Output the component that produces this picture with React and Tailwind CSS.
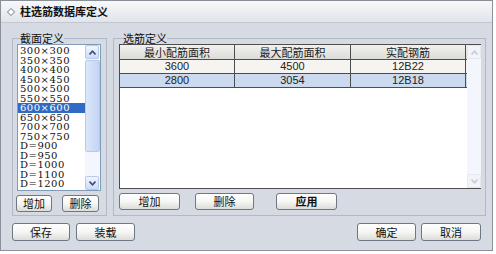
import React from 'react';

const sizes = [
  '300×300', '350×350', '400×400', '450×450', '500×500', '550×550',
  '600×600', '650×650', '700×700', '750×750',
  'D=900', 'D=950', 'D=1000', 'D=1100', 'D=1200',
];

const rows = [
  { min: '3600', max: '4500', bars: '12B22' },
  { min: '2800', max: '3054', bars: '12B18', selected: true },
];

// XP style push button
function Btn({ children, w, h = 'h-[17px]', bold, className = '' }) {
  return (
    <button
      className={`${w} ${h} ${className} shrink-0 rounded-[3px] border border-[#6f7684] bg-gradient-to-b from-white via-[#f6f6f4] to-[#dcdcd8] text-[11px] leading-none text-[#111] ${bold ? 'font-bold' : ''}`}
    >
      {children}
    </button>
  );
}

function Arrow({ up, faded }) {
  return (
    <div className={`flex h-[14px] w-[14px] items-center justify-center rounded-[2px] border ${faded ? 'border-[#e4e8ef] bg-[#f2f4f8]' : 'border-[#b9c8e6] bg-gradient-to-b from-[#f2f6fe] to-[#cddbf6]'}`}>
      <svg width="7" height="5" viewBox="0 0 7 5">
        <path
          d={up ? 'M0.5 4.5 L3.5 1.2 L6.5 4.5' : 'M0.5 0.5 L3.5 3.8 L6.5 0.5'}
          fill="none"
          stroke={faded ? '#c6ccd6' : '#3b4d7a'}
          strokeWidth="1.6"
        />
      </svg>
    </div>
  );
}

function SizeList() {
  return (
    <div className="ml-[1px] flex h-[147px] w-[84px] border border-[#7f9db9] bg-white">
      <div className="flex-1 pt-[1px] font-['DejaVu_Serif',serif] text-[10px] leading-[9.5px] tracking-[0.5px] text-[#111]">
        {sizes.map((s, i) => (
          <div
            key={s}
            className={`h-[9.5px] pl-[2px] ${i === 6 ? 'bg-[#316ac5] text-white' : ''}`}
          >
            {s}
          </div>
        ))}
      </div>
      <div className="flex w-[15px] flex-col bg-[#f3f6fc]">
        <Arrow up />
        <div className="flex-1 py-[1px]">
          <div className="h-[92px] rounded-[2px] border border-[#b8c9ea] bg-gradient-to-r from-[#dde7fa] to-[#c3d4f4]" />
        </div>
        <Arrow />
      </div>
    </div>
  );
}

function BarTable() {
  return (
    <div className="flex h-[145px] w-[362px] border border-[#4d4d4d] bg-white">
      <div className="flex-1">
        <div className="flex h-[15px] border-b border-[#4d4d4d] bg-gradient-to-b from-[#f1f1ef] to-[#dcdcd8] text-[11px] leading-[14px] text-[#222]">
          <div className="w-[115px] border-r border-[#4d4d4d] text-center">最小配筋面积</div>
          <div className="w-[116px] border-r border-[#4d4d4d] text-center">最大配筋面积</div>
          <div className="w-[115px] border-r border-[#4d4d4d] text-center">实配钢筋</div>
        </div>
        {rows.map(r => (
          <div
            key={r.bars}
            className={`flex h-[14px] w-[347px] border-b border-[#4d4d4d] font-['Liberation_Sans',sans-serif] text-[11px] leading-[13px] text-[#222] ${r.selected ? 'bg-[#cbdaee]' : 'bg-[#f6f4f0]'}`}
          >
            <div className="w-[115px] border-r border-[#4d4d4d] text-center">{r.min}</div>
            <div className="w-[116px] border-r border-[#4d4d4d] text-center">{r.max}</div>
            <div className="w-[115px] border-r border-[#4d4d4d] text-center">{r.bars}</div>
          </div>
        ))}
      </div>
      <div className="flex w-[14px] flex-col bg-[#f3f6fc]">
        <Arrow up faded />
        <div className="flex-1" />
        <Arrow faded />
      </div>
    </div>
  );
}

export default function App() {
  return (
    <div className="h-[254px] w-[496px] bg-white font-['Noto_Sans_CJK_SC',sans-serif]">
      <div className="flex h-[251px] w-[493px] flex-col border border-[#8a8f99] bg-[#d6dae3]">
        {/* title bar */}
        <div className="flex h-[22px] items-center gap-[5px] border-b border-[#c3c7cf] bg-gradient-to-b from-[#f7f8fa] to-[#e1e4ea] pl-[6px]">
          <svg width="8" height="8" viewBox="0 0 8 8">
            <path d="M4 0.5 L7.5 4 L4 7.5 L0.5 4 Z" fill="#fff" stroke="#6d7484" strokeWidth="1" />
          </svg>
          <span className="text-[11px] font-bold text-[#111]">柱选筋数据库定义</span>
        </div>

        {/* groups */}
        <div className="flex gap-[6px] pl-[11px] pt-[9px]">
          <fieldset className="h-[184px] w-[95px] border border-[#b3b9c4] px-[3px] pb-[5px]">
            <legend className="ml-[4px] text-[11px] leading-[12px] text-[#111]">截面定义</legend>
            <SizeList />
            <div className="mt-[4px] flex gap-[10px]">
              <Btn w="w-[36px]">增加</Btn>
              <Btn w="w-[37px]">删除</Btn>
            </div>
          </fieldset>

          <fieldset className="h-[184px] w-[373px] border border-[#b3b9c4] pl-[5px] pb-[5px]">
            <legend className="ml-[4px] text-[11px] leading-[12px] text-[#111]">选筋定义</legend>
            <BarTable />
            <div className="mt-[4px] flex items-start">
              <Btn w="w-[61px]">增加</Btn>
              <Btn w="w-[59px]" className="ml-[15px]">删除</Btn>
              <Btn w="w-[61px]" className="ml-[22px]" bold>应用</Btn>
            </div>
          </fieldset>
        </div>

        {/* dialog buttons */}
        <div className="flex items-start px-[11px] pt-[7px]">
          <Btn w="w-[58px]" h="h-[18px]">保存</Btn>
          <Btn w="w-[59px]" h="h-[18px]" className="ml-[6px]">装载</Btn>
          <div className="flex-1" />
          <Btn w="w-[59px]" h="h-[18px]">确定</Btn>
          <Btn w="w-[60px]" h="h-[18px]" className="ml-[5px]">取消</Btn>
        </div>
      </div>
    </div>
  );
}
